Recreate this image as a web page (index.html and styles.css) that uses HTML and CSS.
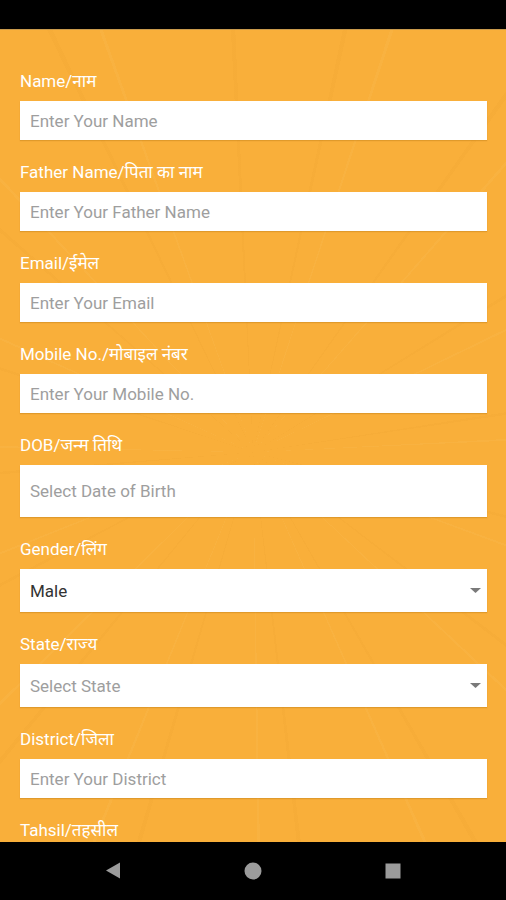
FILE: index.html
```html
<!DOCTYPE html>
<html lang="en">
<head>
  <meta charset="UTF-8">
  <meta name="viewport" content="width=device-width, initial-scale=1.0">
  <title>Registration</title>
  <link rel="stylesheet" href="styles.css">
</head>
<body>
  <div class="status-bar"></div>

  <main class="form-area">
    <form class="reg-form">
      <div class="field">
        <label>Name/नाम</label>
        <input type="text" class="input" placeholder="Enter Your Name">
      </div>
      <div class="field">
        <label>Father Name/पिता का नाम</label>
        <input type="text" class="input" placeholder="Enter Your Father Name">
      </div>
      <div class="field">
        <label>Email/ईमेल</label>
        <input type="email" class="input" placeholder="Enter Your Email">
      </div>
      <div class="field">
        <label>Mobile No./मोबाइल नंबर</label>
        <input type="tel" class="input" placeholder="Enter Your Mobile No.">
      </div>
      <div class="field">
        <label>DOB/जन्म तिथि</label>
        <input type="text" class="input input-tall" placeholder="Select Date of Birth">
      </div>
      <div class="field">
        <label>Gender/लिंग</label>
        <div class="select-box">
          <select class="select">
            <option>Male</option>
            <option>Female</option>
          </select>
          <svg class="caret" width="11" height="5" viewBox="0 0 11 5"><path d="M0 0h11L5.5 5z" fill="#7a7a7a"/></svg>
        </div>
      </div>
      <div class="field">
        <label>State/राज्य</label>
        <div class="select-box">
          <select class="select empty">
            <option>Select State</option>
          </select>
          <svg class="caret" width="11" height="5" viewBox="0 0 11 5"><path d="M0 0h11L5.5 5z" fill="#7a7a7a"/></svg>
        </div>
      </div>
      <div class="field">
        <label>District/जिला</label>
        <input type="text" class="input" placeholder="Enter Your District">
      </div>
      <div class="field">
        <label>Tahsil/तहसील</label>
      </div>
    </form>
  </main>

  <nav class="nav-bar">
    <div class="nav-cell">
      <svg width="16" height="17" viewBox="0 0 16 17"><path d="M15 0.5v16L1 8.5z" fill="#9b9b9b"/></svg>
    </div>
    <div class="nav-cell">
      <svg width="18" height="18" viewBox="0 0 18 18"><circle cx="9" cy="9" r="8.5" fill="#9b9b9b"/></svg>
    </div>
    <div class="nav-cell">
      <svg width="16" height="16" viewBox="0 0 16 16"><rect x="0.5" y="0.5" width="15" height="15" fill="#9b9b9b"/></svg>
    </div>
  </nav>
</body>
</html>
```

FILE: styles.css
```css
* {
  margin: 0;
  padding: 0;
  box-sizing: border-box;
}

body {
  font-family: Roboto, "Noto Sans", sans-serif;
  height: 900px;
  display: flex;
  flex-direction: column;
  background: #000;
  overflow: hidden;
}

.status-bar {
  height: 30px;
  flex-shrink: 0;
  background: #000;
  border-bottom: 1px solid #c99a4c;
}

/* faint sunburst streaks behind the form */
.form-area {
  flex: 1;
  overflow: hidden;
  background-color: #f9af3a;
  background-image: repeating-conic-gradient(from 3deg at 50% 52%,
    rgba(249, 175, 58, 0) 0deg 9deg,
    rgba(214, 140, 30, 0.07) 9deg 9.6deg,
    rgba(249, 175, 58, 0) 9.6deg 15deg,
    rgba(255, 214, 140, 0.08) 15deg 15.4deg,
    rgba(249, 175, 58, 0) 15.4deg 23deg);
  padding: 41px 19px 0 20px;
}

.field {
  margin-bottom: 22px;
}

.field label {
  display: block;
  color: #fff;
  font-size: 17px;
  line-height: 20px;
  margin-bottom: 10px;
}

.input,
.select-box {
  display: block;
  width: 100%;
  height: 39px;
  background: #fff;
  border: none;
  box-shadow: 0 1px 1px rgba(150, 90, 0, 0.25);
}

.input {
  padding: 0 10px;
  font-family: Roboto, sans-serif;
  font-size: 17px;
  color: #333;
  outline: none;
}

.input::placeholder {
  color: #9e9e9e;
}

.input-tall {
  height: 52px;
}

.select-box {
  height: 43px;
  display: flex;
  align-items: center;
  padding-right: 6px;
}

.select {
  flex: 1;
  height: 100%;
  appearance: none;
  -webkit-appearance: none;
  border: none;
  background: transparent;
  padding: 0 10px;
  font-family: Roboto, sans-serif;
  font-size: 17px;
  color: #333;
  outline: none;
}

.select.empty {
  color: #9e9e9e;
}

.caret {
  flex-shrink: 0;
}

.nav-bar {
  height: 58px;
  flex-shrink: 0;
  background: #000;
  display: flex;
  justify-content: center;
  align-items: center;
  padding-bottom: 1px;
}

.nav-cell {
  width: 140px;
  display: flex;
  justify-content: center;
  align-items: center;
}
```
